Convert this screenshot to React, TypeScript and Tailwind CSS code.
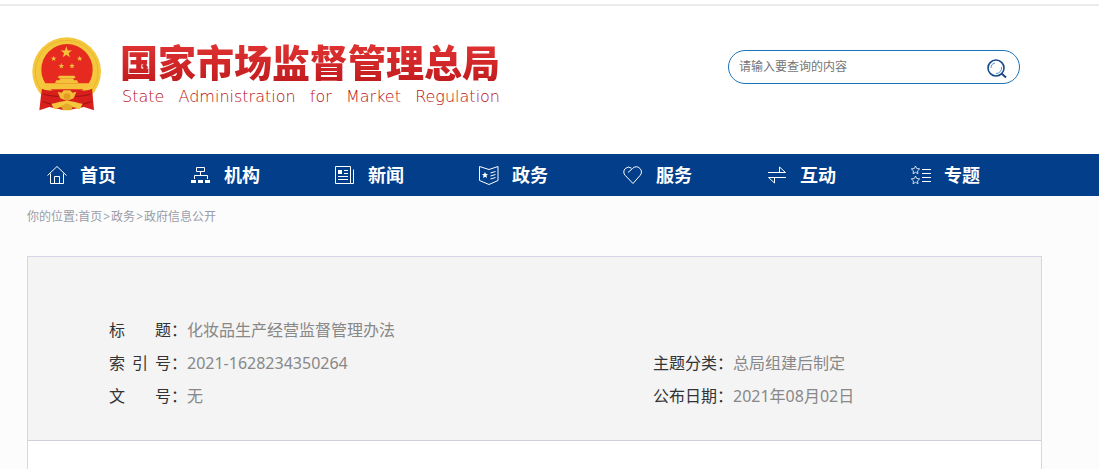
import type { ReactNode } from 'react';

const navItems: { label: string; icon: ReactNode }[] = [
  {
    label: "首页",
    icon: (
      <>
        <path d="M0.5 10.5 10 1.5l9.500 9" />
        <path d="M3.500 8.500v10h13v-10" />
        <path d="M7.500 18.500v-7h5v7" />
      </>
    )
  },
  {
    label: "机构",
    icon: (
      <>
        <path d="M5.500 2.500h8v4h-8zM9.500 6.500v4M3.500 14v-3.500h13V14" />
        <path d="M0 15h5v3H0zM7 15h5v3H7zM14 15h5v3h-5z" fill="currentColor" stroke="none" />
      </>
    )
  },
  {
    label: "新闻",
    icon: (
      <>
        <path d="M0.500 1.500h15v17h-15zM15.500 18.500h3v-14" />
        <path d="M3 5h4v4H3z" fill="currentColor" stroke="none" />
        <path d="M9 5.500h4M9 8.500h4M3 11.500h10M3 14.500h10" />
      </>
    )
  },
  {
    label: "政务",
    icon: (
      <>
        <path d="M0.500 1.500 10 4.500l9-3v14L10 19.500l-9.500-4z" />
        <path d="M11.500 8l5-1.500M11.500 11l5-1.500M11.500 14l5-1.500" />
        <path d="M6 7l1 2h2l-1.500 1.500.5 2.500-2-1.300L4 13l.5-2.500L3 9h2z" fill="currentColor" stroke="none" />
      </>
    )
  },
  {
    label: "服务",
    icon: <path d="M10 18.500 2.300 10.500A4.800 4.800 0 0 1 2.300 3.500a4.800 4.800 0 0 1 6.200-.3M5 7.500l4.500-4a4.900 4.900 0 0 1 7.500 0 4.900 4.900 0 0 1 0 7L10 18.500" />
  },
  {
    label: "互动",
    icon: <path d="M1 7.500h17.500l-6-5.500v5.500M19 12.500H1.500l6 5.500v-5.500" />
  },
  {
    label: "专题",
    icon: (
      <>
        <path d="M4.500 1l1.200 2.500 3 .4-2.200 2 .5 2.800L4.500 7.300 2 8.700l.5-2.800-2.200-2 3-.4zM4.500 11l1.200 2.500 3 .4-2.200 2 .5 2.800-2.500-1.400L2 18.700l.5-2.800-2.200-2 3-.4z" strokeWidth={0.8} />
        <path d="M11 4.500h9M11 8.500h9M11 12.500h9M11 16.500h9" />
      </>
    )
  }
];

const details = [
  { label: ["标", "题："], value: "化妆品生产经营监督管理办法", wide: true },
  { label: ["索", "引", "号："], value: "2021-1628234350264" },
  { label: ["主题分类："], value: "总局组建后制定" },
  { label: ["文", "号："], value: "无" },
  { label: ["公布日期："], value: "2021年08月02日" }
];

const STAR = "M0-10 2.400-3.200 9.500-3.100 3.800 1.200 5.900 8.100 0 4 -5.900 8.100 -3.800 1.200 -9.500-3.100 -2.400-3.200Z";

function Emblem() {
  return (
    <svg viewBox="36 36 210 225" className="h-[75px] w-[70px] shrink-0" aria-hidden="true">
      <circle cx="140" cy="140" r="103" fill="#f4c73c" />
      <circle cx="140" cy="140" r="94" fill="none" stroke="#e3ae2b" strokeWidth="2" />
      <circle cx="141" cy="134" r="77" fill="#e62a1f" />
      <g fill="#f5c33a">
        <path d={STAR} transform="translate(139 82) scale(1.800)" />
        <path d={STAR} transform="translate(101 101) scale(.9)" />
        <path d={STAR} transform="translate(179 101) scale(.9)" />
        <path d={STAR} transform="translate(124 123) scale(.9)" />
        <path d={STAR} transform="translate(156 123) scale(.9)" />
        <path d="M117 152h46l4 7h-54zM119 160h42v6h-42zM109 166h62l4 8h-70zM73 175h134l-8 18H81z" />
      </g>
      <path d="M66 191c20 8 38 6 50 3h50c14 3 30 5 50-3l2 20 4 45-30-10-42 8-20 1-42-9-30 10 5-45z" fill="#d81f1b" />
      <path d="M70 207c20 8 36 5 46 8M212 207c-20 8-36 5-46 8M68 230l28 8M214 230l-28 8" fill="none" stroke="#a91517" strokeWidth="4" />
      <path d="M113 200l12 3 6-7h20l6 7 12-3-8 20-20 8-20-8z" fill="#f1bd36" />
      <path d="M94 236c14 0 25-8 47-8s33 8 47 8l-9 17c-12-6-22-8-38-8s-26 2-38 8z" fill="#f4c73c" />
      <circle cx="141" cy="215" r="10" fill="#e49b25" />
      <path d="M123 244l18-9 18 9-6 12h-24z" fill="#e5aa2c" />
    </svg>
  );
}

export default function App() {
  return (
    <div className="flex min-h-screen flex-col bg-[#fcfcfc] font-['Noto_Sans','Noto_Sans_CJK_SC',sans-serif]">
      <header className="bg-white pt-1">
        <div className="h-0.5 bg-[#ebebeb]" />
        <div className="flex h-[148px] max-w-[1020px] items-start justify-between pl-8">
          <a href="#" className="flex pt-[31px]">
            <Emblem />
            <div className="ml-[18px] pt-1">
              <h1 className="bg-linear-to-b from-[#e23433] to-[#c31c20] bg-clip-text font-['Noto_Sans_CJK_SC',sans-serif] text-[38px] leading-10 font-black whitespace-nowrap text-transparent">
                国家市场监督管理总局
              </h1>
              <p className="mt-2 flex justify-between pl-0.5 font-['DejaVu_Sans',sans-serif] text-base leading-4 font-extralight whitespace-nowrap text-[#b80f12]">
                <span>State</span>{" "}
                <span>Administration</span>{" "}
                <span>for</span>{" "}
                <span>Market</span>{" "}
                <span>Regulation</span>
              </p>
            </div>
          </a>
          <form className="mt-11 flex h-[34px] w-[292px] items-center rounded-full border border-[#1a73bb] pr-3 pl-2.5">
            <input
              type="text"
              aria-label="请输入要查询的内容"
              placeholder="请输入要查询的内容"
              className="min-w-0 flex-1 text-xs text-[#333] outline-none placeholder:text-[#757575]"
            />
            <button type="button" aria-label="搜索">
              <svg viewBox="0 0 20 20" className="mt-1 h-5 w-5" fill="none" stroke="#174a86" strokeWidth="1.600">
                <circle cx="9" cy="9" r="8" />
                <path d="M14.500 14.500l4.500 4" strokeWidth="2" />
                <path d="M4 9a5 5 0 0 1 4-5M14.500 8a5.500 5.500 0 0 1-5.500 6.500" stroke="#4c96d2" strokeWidth="1" />
              </svg>
            </button>
          </form>
        </div>
      </header>

      <nav className="bg-[#023e8a] pl-[47px]">
        <ul className="flex h-[42px] items-center">
          {navItems.map((item) => (
            <li key={item.label} className="w-36">
              <a href="#" className="flex items-center gap-[13px] text-lg font-bold text-white">
                <svg viewBox="0 0 20 20" className="h-5 w-5" fill="none" stroke="currentColor" strokeWidth="1">
                  {item.icon}
                </svg>
                {item.label}
              </a>
            </li>
          ))}
        </ul>
      </nav>

      <main className="flex w-full max-w-[1042px] flex-1 flex-col pl-[27px]">
        <div className="flex h-[60px] items-start pt-3 text-xs leading-[18px] text-[#9a9ca8]">
          <span>你的位置:</span>
          <a href="#">首页</a>
          <span className="px-px">&gt;</span>
          <a href="#">政务</a>
          <span className="px-px">&gt;</span>
          <a href="#">政府信息公开</a>
        </div>

        <section className="flex flex-1 flex-col border border-b-0 border-[#d5d6e8] bg-white">
          <dl className="grid grid-cols-[544px_1fr] border-b border-[#d0d0d8] bg-[#f4f4f4] pt-[57px] pb-[27px] pl-[81px] text-base leading-[33px]">
            {details.map((item) => (
              <div key={item.label.join("")} className={`flex ${item.wide ? 'col-span-2' : ''}`}>
                <dt className="flex min-w-[78px] justify-between text-[#333]">
                  {item.label.map((part) => (
                    <span key={part}>{part}</span>
                  ))}
                </dt>
                <dd className="text-[#888]">{item.value}</dd>
              </div>
            ))}
          </dl>
        </section>
      </main>
    </div>
  );
}
